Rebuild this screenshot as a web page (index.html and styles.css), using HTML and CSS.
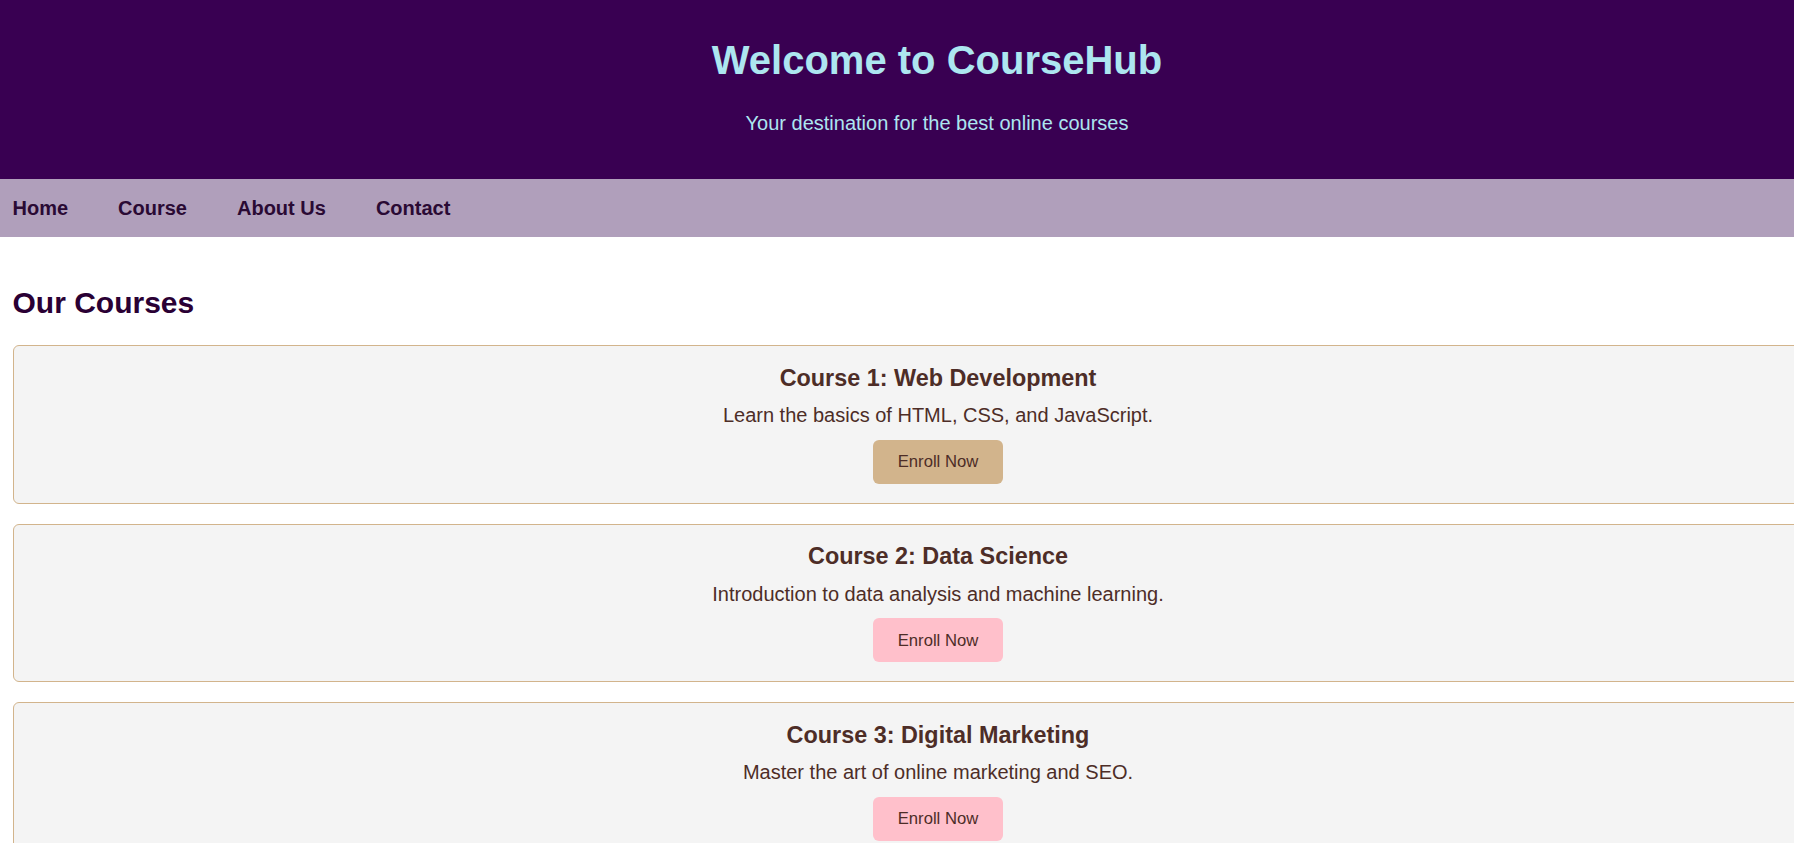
FILE: index.html
```html
<!DOCTYPE html>
<html lang="en">
<head>
<meta charset="utf-8">
<title>CourseHub</title>
<link rel="stylesheet" href="styles.css">
</head>
<body>
<header class="site-header">
  <h1 class="site-title">Welcome to CourseHub</h1>
  <p class="site-tagline">Your destination for the best online courses</p>
</header>
<nav class="site-nav">
  <a class="nav-link" href="#">Home</a>
  <a class="nav-link" href="#">Course</a>
  <a class="nav-link" href="#">About Us</a>
  <a class="nav-link" href="#">Contact</a>
</nav>
<main class="content">
  <h2 class="section-title">Our Courses</h2>
  <div class="course">
    <h3 class="course-title">Course 1: Web Development</h3>
    <p class="course-desc">Learn the basics of HTML, CSS, and JavaScript.</p>
    <button class="enroll enroll-active">Enroll Now</button>
  </div>
  <div class="course">
    <h3 class="course-title">Course 2: Data Science</h3>
    <p class="course-desc">Introduction to data analysis and machine learning.</p>
    <button class="enroll">Enroll Now</button>
  </div>
  <div class="course">
    <h3 class="course-title">Course 3: Digital Marketing</h3>
    <p class="course-desc">Master the art of online marketing and SEO.</p>
    <button class="enroll">Enroll Now</button>
  </div>
</main>
</body>
</html>
```
FILE: styles.css
```css
html {
  overflow-x: hidden;
}
body {
  margin: 0;
  font-family: "Liberation Sans", Arial, sans-serif;
  font-size: 20px;
  background: #ffffff;
  overflow-x: hidden;
}
.site-header {
  width: 100%;
  padding: 25px 40px;
  background: #390052;
  color: #ade6f0;
  text-align: center;
}
.site-title {
  margin: 13px 0 29px;
  font-size: 40px;
  font-weight: bold;
}
.site-tagline {
  margin: 0 0 19px;
  font-size: 20px;
}
.site-nav {
  display: flex;
  gap: 50px;
  padding: 17.5px 12.5px;
  background: #b09fbb;
}
.nav-link {
  color: #2a0a34;
  font-weight: bold;
  font-size: 20px;
  text-decoration: none;
  line-height: 23px;
}
.content {
  padding: 0 12.5px;
}
.section-title {
  margin: 49px 0 25px;
  font-size: 30px;
  color: #2a0034;
}
.course {
  width: 100%;
  padding: 18.75px 40px;
  margin-bottom: 20px;
  background: #f4f4f4;
  border: 1px solid #d2b48c;
  border-radius: 6px;
  display: flex;
  flex-direction: column;
  align-items: center;
  color: #4d2d27;
}
.course-title {
  margin: 0 0 12.5px;
  font-size: 23.4px;
  line-height: 26.9px;
}
.course-desc {
  margin: 0 0 12.5px;
  font-size: 20px;
  line-height: 23px;
}
.enroll {
  font-family: "Liberation Sans", Arial, sans-serif;
  font-size: 16.67px;
  line-height: 19.2px;
  padding: 12.5px 25px;
  border: none;
  border-radius: 6px;
  background: #ffc0cb;
  color: #4d2d27;
}
.enroll-active {
  background: #d2b48c;
}
```
